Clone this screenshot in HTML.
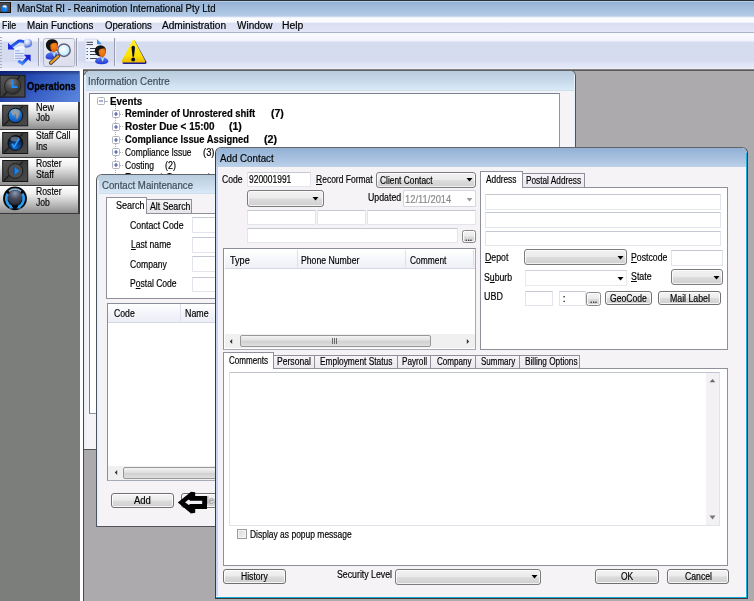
<!DOCTYPE html><html><head><meta charset="utf-8"><title>ManStat RI</title><style>
html,body{margin:0;padding:0;background:#acaaac}
#r{position:relative;width:754px;height:601px;overflow:hidden;will-change:transform;font-family:"Liberation Sans",sans-serif;font-size:11px}
#r>div,#r>svg{position:absolute}
#r>div.t{white-space:nowrap;line-height:1;height:auto;transform-origin:0 50%;-webkit-text-stroke:0.18px currentColor}
u{text-decoration:underline;text-underline-offset:1px}

</style></head><body><div id="r">
<div style="left:0px;top:0px;width:754px;height:601px;background:#acaaac"></div>
<div style="left:0px;top:0px;width:754px;height:18px;background:linear-gradient(#2c2f36 0,#2c2f36 1px,#b4ccec 1px,#b4ccec 2px,#95b2d5 2px,#b4cbe8 16px,#dce7f6 17px,#fdfdff 18px)"></div>
<div style="left:0px;top:2px;width:10.8px;height:10.6px;background:#4a4648;box-sizing:border-box;border-right:1px solid #141010;border-bottom:1px solid #141010;border-top:1px solid #2a2626"><svg width="11" height="11" viewBox="0 0 11 11" style="position:absolute;left:0;top:-1px"><circle cx="4.6" cy="6.6" r="3.5" fill="#0a78e6"/><path d="M2.6 4.2 Q4.6 2.4 6.8 4 L6.4 5.6 L5.6 8.6 L5 5.6 L3 5.2 Z" fill="#f0ece8"/><path d="M5.4 5.4 L5.7 8.4" stroke="#a85a30" stroke-width="0.7"/></svg></div>
<div class="t" id="t0" style="left:16.93px;top:4.28px;font-size:10px;font-weight:normal;color:#000;transform:scaleX(0.960);">ManStat RI - Reanimotion International Pty Ltd</div>
<div style="left:0px;top:18px;width:754px;height:15px;background:linear-gradient(#fdfdff 0,#fbfbff 4px,#d9dff2 5.5px,#e2e6f6 14px,#aab4c8 14px,#aab4c8 15px)"></div>
<div class="t" id="t1" style="left:2.48px;top:21.28px;font-size:10px;font-weight:normal;color:#000;transform:scaleX(0.882);">File</div>
<div class="t" id="t2" style="left:27.42px;top:21.28px;font-size:10px;font-weight:normal;color:#000;transform:scaleX(0.978);">Main Functions</div>
<div class="t" id="t3" style="left:104.75px;top:21.28px;font-size:10px;font-weight:normal;color:#000;transform:scaleX(0.958);">Operations</div>
<div class="t" id="t4" style="left:162.00px;top:21.28px;font-size:10px;font-weight:normal;color:#000;transform:scaleX(1.010);">Administration</div>
<div class="t" id="t5" style="left:237.00px;top:21.28px;font-size:10px;font-weight:normal;color:#000;transform:scaleX(0.997);">Window</div>
<div class="t" id="t6" style="left:282.39px;top:21.28px;font-size:10px;font-weight:normal;color:#000;transform:scaleX(1.039);">Help</div>
<div style="left:0px;top:33px;width:754px;height:37.5px;background:linear-gradient(#f9f3f7 0,#fafaff 1px,#f2f3fc 8px,#d6dcf0 9px,#d6dcf0 28px,#dee3f6 30px,#e4e8f8 35px,#f0f0fa 35.5px,#808080 36.2px,#808080 37px,#9a989a 37.5px)"></div>
<div style="left:0px;top:37px;width:2px;height:1px;background:#a8acc0"></div>
<div style="left:0px;top:40px;width:2px;height:1px;background:#a8acc0"></div>
<div style="left:0px;top:43px;width:2px;height:1px;background:#a8acc0"></div>
<div style="left:0px;top:46px;width:2px;height:1px;background:#a8acc0"></div>
<div style="left:0px;top:49px;width:2px;height:1px;background:#a8acc0"></div>
<div style="left:0px;top:52px;width:2px;height:1px;background:#a8acc0"></div>
<div style="left:0px;top:55px;width:2px;height:1px;background:#a8acc0"></div>
<div style="left:0px;top:58px;width:2px;height:1px;background:#a8acc0"></div>
<div style="left:0px;top:61px;width:2px;height:1px;background:#a8acc0"></div>
<div style="left:0px;top:64px;width:2px;height:1px;background:#a8acc0"></div>
<div style="left:0px;top:67px;width:2px;height:1px;background:#a8acc0"></div>
<div style="left:38px;top:38px;width:1px;height:27.5px;background:#9a9cae"></div>
<div style="left:39px;top:38px;width:1px;height:27.5px;background:#eef0f8"></div>
<div style="left:76px;top:38px;width:1px;height:27.5px;background:#9a9cae"></div>
<div style="left:77px;top:38px;width:1px;height:27.5px;background:#eef0f8"></div>
<div style="left:113.5px;top:38px;width:1px;height:27.5px;background:#9a9cae"></div>
<div style="left:114.5px;top:38px;width:1px;height:27.5px;background:#eef0f8"></div>
<div style="left:43.3px;top:37.5px;width:31.5px;height:29px;box-sizing:border-box;border:1px solid #b6b8c6;border-radius:2.5px;background:linear-gradient(#eceef6,#e0e3ee 60%,#dcdfeb)"></div>

<svg style="position:absolute;left:0;top:33px" width="160" height="37" viewBox="0 33 160 37">
 <defs>
  <linearGradient id="gb" x1="0" y1="0" x2="1" y2="1"><stop offset="0" stop-color="#1a2ee0"/><stop offset="0.6" stop-color="#2a6af0"/><stop offset="1" stop-color="#5aa0ff"/></linearGradient>
  <linearGradient id="gb2" x1="0" y1="1" x2="1" y2="0"><stop offset="0" stop-color="#5a9cff"/><stop offset="0.5" stop-color="#2a62f0"/><stop offset="1" stop-color="#1a22d8"/></linearGradient>
  <radialGradient id="gl" cx="0.42" cy="0.4" r="0.7"><stop offset="0" stop-color="#ffffff"/><stop offset="0.55" stop-color="#d4f0ff"/><stop offset="1" stop-color="#9cd4f8"/></radialGradient>
  <radialGradient id="gg" cx="0.35" cy="0.3" r="0.8"><stop offset="0" stop-color="#ffffff"/><stop offset="0.45" stop-color="#b8caf4"/><stop offset="1" stop-color="#3a5ad0"/></radialGradient>
  <linearGradient id="gy" x1="0" y1="0" x2="0" y2="1"><stop offset="0" stop-color="#fff02a"/><stop offset="0.7" stop-color="#fde000"/><stop offset="1" stop-color="#e8b800"/></linearGradient>
  <linearGradient id="gbody" x1="0" y1="0" x2="0" y2="1"><stop offset="0" stop-color="#5a78f4"/><stop offset="1" stop-color="#2238d0"/></linearGradient>
  <radialGradient id="gface" cx="0.5" cy="0.35" r="0.75"><stop offset="0" stop-color="#f88a1c"/><stop offset="0.7" stop-color="#e06410"/><stop offset="1" stop-color="#a83c08"/></radialGradient>
 </defs>
 <!-- icon1 sync -->
 <g>
  <rect x="13.2" y="47" width="11.8" height="13.4" fill="#e6edfc" stroke="#c0ccf0" stroke-width="0.7"/>
  <path d="M15 53.4h8.6M15 56h8.6M15 58.4h8.6" stroke="#93a3dc" stroke-width="1"/>
  <path d="M15 50.8h4.5" stroke="#93a3dc" stroke-width="1"/>
  <path d="M13.4 49.6 Q18 45.2 25.6 46 L25 48.6 Q20 47.6 16 50.6 Z" fill="#f4f7ff"/>
  <path d="M11.2 46.6 L18.6 41.2 Q21.5 40.2 25.2 42.6" stroke="url(#gb)" stroke-width="3" fill="none" stroke-linejoin="round"/>
  <path d="M8 42.8 L8 49.6 L14.8 49.6 Z" fill="#1a2ee0"/>
  <circle cx="28" cy="43" r="4.1" fill="url(#gg)"/>
  <path d="M23.4 46.4 Q27 49.4 31.4 45.8 Q28.6 47.2 25.6 46.2 Z" fill="#3a56d0" opacity=".8"/>
  <path d="M18.2 61 L22.4 63.6 L27.6 58" stroke="url(#gb2)" stroke-width="3" fill="none" stroke-linejoin="miter"/>
  <path d="M23.8 54.8 L30.6 54.8 L30.6 61.6 Z" fill="#1a22d8"/>
 </g>
 <!-- icon2 person + magnifier -->
 <g>
  <path d="M45.6 58 Q45.2 53 51 52.2 L56.5 52.5 L57.5 56 L52 59.5 Q48 60 45.6 58 Z" fill="url(#gbody)"/>
  <path d="M52 52.5 L54.3 57 L56 52.5 Z" fill="#a8dcfa"/>
  <path d="M50.5 51.5 Q45 49 46 43.5 Q47.5 38.8 53 39.2 Q57.5 39.6 58 44 L56.5 51 Z" fill="#111"/>
  <path d="M50.2 45 Q52 42.3 56 42.8 Q58.2 44 57.6 47.5 Q57 51 54.2 52.4 Q51.5 52 50.6 49 Z" fill="url(#gface)"/>
  <path d="M58.3 56 L50.8 63" stroke="#4a4656" stroke-width="3.8" stroke-linecap="round"/>
  <path d="M58.1 56.2 L51 62.8" stroke="#f8a01c" stroke-width="2" stroke-linecap="round"/>
  <circle cx="64" cy="50.2" r="6.2" fill="url(#gl)" stroke="#66607e" stroke-width="1.5"/>
 </g>
 <!-- icon3 doc + person -->
 <g>
  <path d="M85 39.2 h12 l5 5 v18 h-17 Z" fill="#edf2fd" stroke="#c8d2ee" stroke-width="0.7"/>
  <path d="M97 39.2 l5 5 h-5 Z" fill="#3c8ce8"/>
  <path d="M86.5 42.3h6.5M86.5 44.6h6.5M90 48.5h7M90 51.5h7M90 54.5h7M90 58.5h7" stroke="#3c4254" stroke-width="1"/>
  <path d="M86.6 48.5h1.2M86.6 51.5h1.2M86.6 54.5h1.2M86.6 58.5h1.2" stroke="#3c4254" stroke-width="1.1"/>
  <path d="M95 61.5 Q95.5 57.6 101 57.2 Q108 57.4 108.4 61.5 Q108 64 101.5 64.2 Q95.3 64 95 61.5 Z" fill="url(#gbody)"/>
  <path d="M100.8 57.4 L102.6 62 L104.4 57.4 Z" fill="#a8dcfa"/>
  <circle cx="100.4" cy="50.8" r="5.6" fill="#141414"/>
  <path d="M98.6 50.6 Q100.5 47.8 104.6 48.6 Q106.3 50 105.8 53 Q105.2 56.3 102.4 57.4 Q99.6 56.6 99 54 Z" fill="url(#gface)"/>
 </g>
 <!-- icon4 warning -->
 <g>
  <path d="M134.6 40.2 L146.4 61.8 Q147 64 144.8 64 L123.5 64 Q121.8 63.6 122.8 62 Z" fill="#1c1c94"/>
  <path d="M132.4 40.4 Q133.5 39 134.6 40.4 L145 60.4 Q145.8 62.6 143.6 62.6 L123.2 62.6 Q121 62.6 121.9 60.4 Z" fill="url(#gy)"/>
  <path d="M131.5 47.6 Q131.6 45.8 133.2 45.8 Q134.9 45.8 135 47.6 L134 56.4 Q133.2 57 132.5 56.4 Z" fill="#0c0c20"/>
  <circle cx="133.2" cy="59.5" r="1.9" fill="#0c0c20"/>
 </g>
</svg>

<div style="left:0px;top:70px;width:79.5px;height:531px;background:#7c7e7b"></div>
<div style="left:79.5px;top:69px;width:3px;height:532px;background:#fff"></div>
<div style="left:0px;top:69px;width:79.5px;height:2px;background:#eef0fa"></div>
<div style="left:82.5px;top:69.5px;width:671.5px;height:1.1px;background:#5a5a5a"></div>
<div style="left:82.5px;top:69.5px;width:1px;height:531.5px;background:#484848"></div>
<div style="left:0px;top:71px;width:79.3px;height:30.5px;background:linear-gradient(90deg,#14309a 0,#2a52c0 45%,#4b7ad8 100%)"></div>
<div style="left:0px;top:71px;width:79.3px;height:30.5px;background:linear-gradient(rgba(0,0,40,.45) 0,rgba(0,0,40,.3) 2px,rgba(0,0,30,.08) 4px,rgba(255,255,255,.04) 60%,rgba(255,255,255,.1))"></div>
<div class="t" id="t7" style="left:26.96px;top:81.47px;font-size:11px;font-weight:bold;color:#000;transform:scaleX(0.839);-webkit-text-stroke:0.35px #000;">Operations</div>
<div style="left:0px;top:102px;width:79px;height:28px;background:linear-gradient(#fdfdfd 0,#f0f0f0 25%,#c4c4c4 60%,#8e8e8e 100%);box-sizing:border-box;border-bottom:1px solid #3c3c3c;border-top:1px solid #fff"></div>
<div style="left:0px;top:130px;width:79px;height:28px;background:linear-gradient(#fdfdfd 0,#f0f0f0 25%,#c4c4c4 60%,#8e8e8e 100%);box-sizing:border-box;border-bottom:1px solid #3c3c3c;border-top:1px solid #fff"></div>
<div style="left:0px;top:158px;width:79px;height:28px;background:linear-gradient(#fdfdfd 0,#f0f0f0 25%,#c4c4c4 60%,#8e8e8e 100%);box-sizing:border-box;border-bottom:1px solid #3c3c3c;border-top:1px solid #fff"></div>
<div style="left:0px;top:186px;width:79px;height:28px;background:linear-gradient(#fdfdfd 0,#f0f0f0 25%,#c4c4c4 60%,#8e8e8e 100%);box-sizing:border-box;border-bottom:1px solid #3c3c3c;border-top:1px solid #fff"></div>
<div style="left:78px;top:102px;width:1.5px;height:112px;background:#3c3c3c"></div>
<div style="left:0px;top:213px;width:80px;height:1px;background:#3a3a3a"></div>
<div class="t" id="t8" style="left:35.97px;top:103.47px;font-size:10px;font-weight:normal;color:#000;transform:scaleX(0.902);">New</div>
<div class="t" id="t9" style="left:36.37px;top:113.47px;font-size:10px;font-weight:normal;color:#000;transform:scaleX(0.861);">Job</div>
<div class="t" id="t10" style="left:36.02px;top:131.28px;font-size:10px;font-weight:normal;color:#000;transform:scaleX(0.849);">Staff Call</div>
<div class="t" id="t11" style="left:35.90px;top:142.08px;font-size:10px;font-weight:normal;color:#000;transform:scaleX(0.854);">Ins</div>
<div class="t" id="t12" style="left:35.99px;top:159.28px;font-size:10px;font-weight:normal;color:#000;transform:scaleX(0.868);">Roster</div>
<div class="t" id="t13" style="left:36.00px;top:170.08px;font-size:10px;font-weight:normal;color:#000;transform:scaleX(0.877);">Staff</div>
<div class="t" id="t14" style="left:35.99px;top:187.28px;font-size:10px;font-weight:normal;color:#000;transform:scaleX(0.868);">Roster</div>
<div class="t" id="t15" style="left:36.37px;top:198.08px;font-size:10px;font-weight:normal;color:#000;transform:scaleX(0.861);">Job</div>

<svg style="position:absolute;left:0;top:71px" width="80" height="145" viewBox="0 71 80 145">
 <defs>
  <linearGradient id="sq" x1="0" y1="0" x2="1" y2="1"><stop offset="0" stop-color="#585858"/><stop offset="0.5" stop-color="#3c3c3c"/><stop offset="1" stop-color="#4c4c4c"/></linearGradient>
  <radialGradient id="orb" cx="0.42" cy="0.28" r="0.8"><stop offset="0" stop-color="#7c7c7c"/><stop offset="0.5" stop-color="#484848"/><stop offset="1" stop-color="#262626"/></radialGradient>
  <radialGradient id="orb2" cx="0.5" cy="0.2" r="0.9"><stop offset="0" stop-color="#8c98ac"/><stop offset="0.45" stop-color="#44485a"/><stop offset="1" stop-color="#20222c"/></radialGradient>
  <radialGradient id="orbb" cx="0.45" cy="0.25" r="0.85"><stop offset="0" stop-color="#8cccff"/><stop offset="0.35" stop-color="#1e86ec"/><stop offset="1" stop-color="#0a3a90"/></radialGradient>
  <radialGradient id="orbd" cx="0.5" cy="0.8" r="0.8"><stop offset="0" stop-color="#1468c8"/><stop offset="0.6" stop-color="#0a2c5c"/><stop offset="1" stop-color="#05070c"/></radialGradient>
 </defs>
 <g>
  <rect x="0" y="75.3" width="25" height="21.8" fill="url(#sq)" stroke="#161616" stroke-width="1"/>
  <path d="M3 96.5 L20 76" stroke="#1e1e1e" stroke-width="1.5"/>
  <circle cx="12.7" cy="86" r="8.2" fill="url(#orb)" stroke="#222" stroke-width="0.9"/>
  <path d="M12.4 80 V87 H17.6" stroke="#1e8cff" stroke-width="1.8" fill="none"/>
 </g>
 <g>
  <rect x="2.7" y="105.3" width="25" height="20.5" fill="url(#sq)" stroke="#161616" stroke-width="1"/>
  <path d="M4 125 L23 106" stroke="#1e1e1e" stroke-width="1.5"/>
  <circle cx="15.4" cy="115.5" r="7.3" fill="url(#orbb)" stroke="#101010" stroke-width="1"/>
  <path d="M11 111 Q15 108.3 19.6 110.6 L19.5 114 L17 120 L15.5 116 L12 114.5 Z" fill="#9a9a9a" opacity="0.92"/>
  <path d="M15.3 114 L16 119" stroke="#b05a28" stroke-width="0.9"/>
 </g>
 <g>
  <rect x="2.7" y="132.5" width="25" height="21" fill="url(#sq)" stroke="#161616" stroke-width="1"/>
  <path d="M4 152.5 L23 133.5" stroke="#1e1e1e" stroke-width="1.5"/>
  <circle cx="15.4" cy="143" r="7.4" fill="url(#orbd)" stroke="#0c0c0c" stroke-width="1"/>
  <ellipse cx="15" cy="139" rx="4.6" ry="2.4" fill="#9aa4b4" opacity=".55"/>
  <path d="M11.8 143.6 L14 147 L19.2 138.6" stroke="#2aa0ff" stroke-width="1.5" fill="none"/>
 </g>
 <g>
  <rect x="2.7" y="160.5" width="25" height="21" fill="url(#sq)" stroke="#161616" stroke-width="1"/>
  <path d="M4 180.5 L23 161.5" stroke="#1e1e1e" stroke-width="1.5"/>
  <circle cx="15.4" cy="171" r="7.4" fill="#4e4e4e" stroke="#1c1c1c" stroke-width="1"/>
  <path d="M13 166 L19.6 171 L13 176 Z" fill="#1a80ea"/>
  <path d="M13 166 L14.6 167.2 L14.6 174.8 L13 176 Z" fill="#0c50a8"/>
 </g>
 <g>
  <circle cx="15" cy="198.4" r="11.9" fill="#080808"/>
  <circle cx="15" cy="197.6" r="7.4" fill="url(#orb2)"/>
  <path d="M7.6 193.6 A9.4 9.4 0 0 0 11.6 207" stroke="#2a9cf4" stroke-width="2.5" fill="none"/>
  <path d="M22.4 193.6 A9.4 9.4 0 0 1 18.4 207" stroke="#2a9cf4" stroke-width="2.5" fill="none"/>
  <path d="M9 191.4 A9.2 9.2 0 0 1 21 191.4" stroke="#9cd4ff" stroke-width="1.6" fill="none" opacity=".85"/>
  <path d="M10 204.5 L13.5 208.3 L9.4 208.8 Z M20 204.5 L16.5 208.3 L20.6 208.8 Z" fill="#2a9cf4"/>
 </g>
</svg>

<div style="left:83.5px;top:70.4px;width:492.5px;height:379.6px;background:#f6f3f7;box-sizing:border-box;border:1px solid #50545a;border-top-color:#60646a;border-radius:6px 6px 0 0"></div>
<div style="left:84.5px;top:71.4px;width:490.5px;height:19.5px;background:linear-gradient(#b8ccde 0,#c8daea 50%,#daeaf8 96%,#b8c8d8 100%);border-radius:5px 5px 0 0"></div>
<div class="t" id="t16" style="left:88.01px;top:77.17px;font-size:10px;font-weight:normal;color:#404c58;transform:scaleX(0.986);">Information Centre</div>
<div style="left:84px;top:91px;width:491px;height:358px;background:#f6f3f7"></div>
<div style="left:84px;top:75px;width:1.5px;height:374px;background:#e6f0fb"></div>
<div style="left:573.5px;top:75px;width:1.5px;height:374px;background:#e6f0fb"></div>
<div style="left:88.8px;top:92.8px;width:471.2px;height:321.2px;background:#fff;box-sizing:border-box;border:1px solid #8e96a6;border-top-color:#788094;border-left-color:#788094"></div>
<div style="left:115px;top:105px;width:0;height:70px;border-left:1px dotted #a8a8a8"></div>
<div style="left:105px;top:101px;width:3px;height:1px;background:#b0b0b0"></div>
<svg style="position:absolute;left:97px;top:97px" width="8" height="8"><rect x="0.5" y="0.5" width="7" height="7" rx="1" fill="#fdfdfd" stroke="#b0b3bc"/><path d="M2 4h4" stroke="#5068b8" stroke-width="1"/></svg>
<div class="t" id="t17" style="left:109.58px;top:96.77px;font-size:10px;font-weight:bold;color:#000;transform:scaleX(0.980);">Events</div>
<svg style="position:absolute;left:112px;top:110px" width="8" height="8"><rect x="0.5" y="0.5" width="7" height="7" rx="1" fill="#fdfdfd" stroke="#b0b3bc"/><path d="M2 4h4" stroke="#5068b8" stroke-width="1"/><path d="M4 2v4" stroke="#2a3c98" stroke-width="1"/></svg>
<div style="left:120px;top:114px;width:3px;height:0;border-top:1px dotted #b0b0b0"></div>
<div class="t" id="t18" style="left:124.80px;top:109.27px;font-size:10px;font-weight:bold;color:#000;transform:scaleX(0.941);">Reminder of Unrostered shift</div>
<div class="t" id="t19" style="left:271.02px;top:109.27px;font-size:10px;font-weight:bold;color:#000;transform:scaleX(1.049);">(7)</div>
<svg style="position:absolute;left:112px;top:123px" width="8" height="8"><rect x="0.5" y="0.5" width="7" height="7" rx="1" fill="#fdfdfd" stroke="#b0b3bc"/><path d="M2 4h4" stroke="#5068b8" stroke-width="1"/><path d="M4 2v4" stroke="#2a3c98" stroke-width="1"/></svg>
<div style="left:120px;top:126px;width:3px;height:0;border-top:1px dotted #b0b0b0"></div>
<div class="t" id="t20" style="left:124.78px;top:121.77px;font-size:10px;font-weight:bold;color:#000;transform:scaleX(0.991);">Roster Due &lt; 15:00</div>
<div class="t" id="t21" style="left:229.42px;top:121.77px;font-size:10px;font-weight:bold;color:#000;transform:scaleX(1.049);">(1)</div>
<svg style="position:absolute;left:112px;top:136px" width="8" height="8"><rect x="0.5" y="0.5" width="7" height="7" rx="1" fill="#fdfdfd" stroke="#b0b3bc"/><path d="M2 4h4" stroke="#5068b8" stroke-width="1"/><path d="M4 2v4" stroke="#2a3c98" stroke-width="1"/></svg>
<div style="left:120px;top:139px;width:3px;height:0;border-top:1px dotted #b0b0b0"></div>
<div class="t" id="t22" style="left:124.99px;top:134.68px;font-size:10px;font-weight:bold;color:#000;transform:scaleX(0.935);">Compliance Issue Assigned</div>
<div class="t" id="t23" style="left:264.21px;top:134.68px;font-size:10px;font-weight:bold;color:#000;transform:scaleX(1.066);">(2)</div>
<svg style="position:absolute;left:112px;top:148px" width="8" height="8"><rect x="0.5" y="0.5" width="7" height="7" rx="1" fill="#fdfdfd" stroke="#b0b3bc"/><path d="M2 4h4" stroke="#5068b8" stroke-width="1"/><path d="M4 2v4" stroke="#2a3c98" stroke-width="1"/></svg>
<div style="left:120px;top:152px;width:3px;height:0;border-top:1px dotted #b0b0b0"></div>
<div class="t" id="t24" style="left:124.94px;top:147.58px;font-size:10px;font-weight:normal;color:#000;transform:scaleX(0.837);">Compliance Issue</div>
<div class="t" id="t25" style="left:203.31px;top:147.58px;font-size:10px;font-weight:normal;color:#000;transform:scaleX(0.940);">(3)</div>
<svg style="position:absolute;left:112px;top:161px" width="8" height="8"><rect x="0.5" y="0.5" width="7" height="7" rx="1" fill="#fdfdfd" stroke="#b0b3bc"/><path d="M2 4h4" stroke="#5068b8" stroke-width="1"/><path d="M4 2v4" stroke="#2a3c98" stroke-width="1"/></svg>
<div style="left:120px;top:165px;width:3px;height:0;border-top:1px dotted #b0b0b0"></div>
<div class="t" id="t26" style="left:124.93px;top:160.58px;font-size:10px;font-weight:normal;color:#000;transform:scaleX(0.856);">Costing</div>
<div class="t" id="t27" style="left:164.62px;top:160.58px;font-size:10px;font-weight:normal;color:#000;transform:scaleX(0.896);">(2)</div>
<div class="t" id="t28" style="left:124.79px;top:173.38px;font-size:10px;font-weight:bold;color:#000;transform:scaleX(0.964);">Request Comments</div>
<div class="t" id="t29" style="left:230.72px;top:173.38px;font-size:10px;font-weight:bold;color:#000;transform:scaleX(1.023);">(1)</div>
<div style="left:96px;top:174px;width:304px;height:353px;background:#f6f3f7;box-sizing:border-box;border:1px solid #50545a;border-top-color:#60646a;border-radius:6px 6px 0 0"></div>
<div style="left:97px;top:175px;width:302px;height:19px;background:linear-gradient(#b8ccde 0,#c8daea 50%,#daeaf8 96%,#b8c8d8 100%);border-radius:5px 5px 0 0"></div>
<div class="t" id="t30" style="left:101.70px;top:181.18px;font-size:10px;font-weight:normal;color:#404c58;transform:scaleX(0.963);">Contact Maintenance</div>
<div style="left:97px;top:180px;width:1.5px;height:346px;background:#e6f0fb"></div>
<div style="left:106px;top:213px;width:284px;height:86px;background:#fff;box-sizing:border-box;border:1px solid #8f9099"></div>
<div style="left:106px;top:197px;width:40.5px;height:17px;background:#fff;box-sizing:border-box;border:1px solid #8f9099;border-bottom:none"></div>
<div style="left:146.5px;top:199px;width:45.5px;height:14px;background:linear-gradient(#f4f4f6,#e6e6ea);box-sizing:border-box;border:1px solid #8f9099;border-left:none;border-bottom:none"></div>
<div class="t" id="t31" style="left:115.99px;top:200.78px;font-size:10px;font-weight:normal;color:#000;transform:scaleX(0.904);">Search</div>
<div class="t" id="t32" style="left:149.50px;top:202.28px;font-size:10px;font-weight:normal;color:#000;transform:scaleX(0.876);">Alt Search</div>
<div class="t" id="t33" style="left:130.23px;top:220.97px;font-size:10px;font-weight:normal;color:#000;transform:scaleX(0.875);">Contact Code</div>
<div class="t" id="t34" style="left:130.50px;top:240.28px;font-size:10px;font-weight:normal;color:#000;transform:scaleX(0.858);"><u>L</u>ast name</div>
<div class="t" id="t35" style="left:130.23px;top:259.78px;font-size:10px;font-weight:normal;color:#000;transform:scaleX(0.859);">Company</div>
<div class="t" id="t36" style="left:129.99px;top:279.38px;font-size:10px;font-weight:normal;color:#000;transform:scaleX(0.856);">P<u>o</u>stal Code</div>
<div style="left:192px;top:217px;width:138px;height:15.8px;background:#fff;box-sizing:border-box;border:1px solid #e4e5ec;border-top-color:#c4c8d2"></div>
<div style="left:192px;top:237px;width:138px;height:15.8px;background:#fff;box-sizing:border-box;border:1px solid #e4e5ec;border-top-color:#c4c8d2"></div>
<div style="left:192px;top:256.3px;width:138px;height:15.8px;background:#fff;box-sizing:border-box;border:1px solid #e4e5ec;border-top-color:#c4c8d2"></div>
<div style="left:192px;top:276.5px;width:138px;height:15.8px;background:#fff;box-sizing:border-box;border:1px solid #e4e5ec;border-top-color:#c4c8d2"></div>
<div style="left:106.5px;top:302.5px;width:283.5px;height:178.5px;background:#fff;box-sizing:border-box;border:1px solid #a6aab4;border-top-color:#8a8e98;border-left-color:#8a8e98"></div>
<div style="left:108px;top:304px;width:281px;height:18px;background:linear-gradient(#ffffff,#f4f5fa 50%,#eceef6)"></div>
<div style="left:108px;top:321.5px;width:281px;height:1px;background:#d5d8e2"></div>
<div style="left:179.5px;top:304px;width:1px;height:17px;background:#dde0ea"></div>
<div class="t" id="t37" style="left:113.53px;top:309.08px;font-size:10px;font-weight:normal;color:#000;transform:scaleX(0.866);">Code</div>
<div class="t" id="t38" style="left:184.98px;top:309.08px;font-size:10px;font-weight:normal;color:#000;transform:scaleX(0.886);">Name</div>
<div style="left:108px;top:466px;width:281px;height:13.5px;background:#f0f0f0"></div>
<div style="left:123px;top:467px;width:266px;height:11.5px;background:linear-gradient(#f4f4f4,#dcdcdc 50%,#cfcfcf 50%,#e0e0e0);box-sizing:border-box;border:1px solid #989898;border-radius:2px"></div>
<svg style="position:absolute;left:112.5px;top:468px" width="6" height="9"><path d="M4.2 2 L1.8 4.5 L4.2 7 Z" fill="#333"/></svg>
<div style="left:111px;top:493px;width:63px;height:14.5px;box-sizing:border-box;border:1px solid #707070;border-radius:3px;background:linear-gradient(#f4f4f4 0,#ebebeb 48%,#dcdcdc 52%,#cfcfcf 100%);box-shadow:inset 0 0 0 1px rgba(255,255,255,.8)"></div>
<div class="t" id="t39" style="left:134.00px;top:496.03px;font-size:10px;font-weight:normal;color:#000;transform:scaleX(0.949);">Add</div>
<div style="left:181px;top:493px;width:63px;height:14.5px;box-sizing:border-box;border:1px solid #707070;border-radius:3px;background:linear-gradient(#f4f4f4 0,#ebebeb 48%,#dcdcdc 52%,#cfcfcf 100%);box-shadow:inset 0 0 0 1px rgba(255,255,255,.8)"></div>
<div class="t" id="t40" style="left:199.71px;top:496.03px;font-size:10px;font-weight:normal;color:#9a9a9a;transform:scaleX(0.938);">Clear</div>
<svg style="position:absolute;left:176px;top:489px" width="36" height="26" viewBox="176 489 36 26"><path d="M177.8 502.5 L191 491.8 L195.2 492.2 L195.2 496 L207 496 L207 509 L195.2 509 L195.2 512.8 L191 513.4 Z" fill="#000"/><path d="M185 502.3 L188.8 499.6 L190.2 500.8 L202.2 500.8 L202.2 504 L190.2 504 L188.8 505 Z" fill="#f3f1f5"/></svg>
<div style="left:214.5px;top:146.7px;width:533.9px;height:452px;background:#f6f3f7;box-sizing:border-box;border:1px solid #3e3838;border-top-color:#626468;border-radius:6px 6px 0 0"></div>
<div style="left:215.5px;top:147.7px;width:531.9px;height:19px;background:linear-gradient(#93b0d5 0,#a5bfde 50%,#bdd0e8 100%);border-radius:5px 5px 0 0"></div>
<div class="t" id="t41" style="left:220.40px;top:153.58px;font-size:10px;font-weight:normal;color:#000;transform:scaleX(0.975);">Add Contact</div>
<div style="left:746.2px;top:153px;width:1.2px;height:444.7px;background:#18b0e0"></div>
<div style="left:216px;top:596.5px;width:531.4px;height:1.2px;background:#14a8d4"></div>
<div style="left:745.4px;top:167px;width:0.8px;height:429.5px;background:#fff"></div>
<div style="left:216px;top:167px;width:1.5px;height:429px;background:#c4d6f4"></div>
<div class="t" id="t42" style="left:222.33px;top:174.78px;font-size:10px;font-weight:normal;color:#000;transform:scaleX(0.858);">Code</div>
<div style="left:246.5px;top:171.5px;width:64.5px;height:15.5px;background:#fff;box-sizing:border-box;border:1px solid #e4e5ec;border-top-color:#c4c8d2;border-radius:1px;"></div>
<div class="t" id="t43" style="left:249.28px;top:175.08px;font-size:10px;font-weight:normal;color:#000;transform:scaleX(0.845);">920001991</div>
<div class="t" id="t44" style="left:315.50px;top:174.78px;font-size:10px;font-weight:normal;color:#000;transform:scaleX(0.850);"><u>R</u>ecord Format</div>
<div style="left:376.4px;top:171.6px;width:99.8px;height:16px;box-sizing:border-box;border:1px solid #7c7c7c;border-radius:3px;background:linear-gradient(#f2f2f2 0,#ebebeb 48%,#dddddd 52%,#cfcfcf 100%);box-shadow:inset 0 0 0 1px rgba(255,255,255,.7)"></div>
<svg style="position:absolute;left:466px;top:178.1px" width="8" height="5"><path d="M0.5 0 L6.5 0 L3.5 3.5 Z" fill="#000"/></svg>
<div class="t" id="t45" style="left:379.74px;top:175.78px;font-size:10px;font-weight:normal;color:#000;transform:scaleX(0.837);">Client Contact</div>
<div style="left:246.5px;top:190px;width:77px;height:17px;box-sizing:border-box;border:1px solid #7c7c7c;border-radius:3px;background:linear-gradient(#f2f2f2 0,#ebebeb 48%,#dddddd 52%,#cfcfcf 100%);box-shadow:inset 0 0 0 1px rgba(255,255,255,.7)"></div>
<svg style="position:absolute;left:312px;top:197px" width="8" height="5"><path d="M0.5 0 L6.5 0 L3.5 3.5 Z" fill="#000"/></svg>
<div class="t" id="t46" style="left:367.54px;top:193.47px;font-size:10px;font-weight:normal;color:#000;transform:scaleX(0.876);">Updated</div>
<div style="left:403px;top:189.7px;width:73.3px;height:17.8px;background:#fff;box-sizing:border-box;border:1px solid #d4d7de;border-radius:1px"></div>
<div class="t" id="t47" style="left:404.99px;top:194.78px;font-size:10px;font-weight:normal;color:#8a8a8a;transform:scaleX(0.939);">12/11/2014</div>
<svg style="position:absolute;left:466px;top:197.5px" width="8" height="5"><path d="M0.5 0 L6.5 0 L3.5 3.5 Z" fill="#9a9a9a"/></svg>
<div style="left:246.5px;top:209.5px;width:69px;height:15px;background:#fff;box-sizing:border-box;border:1px solid #e4e5ec;border-top-color:#c4c8d2;border-radius:1px;"></div>
<div style="left:316.5px;top:209.5px;width:49.5px;height:15px;background:#fff;box-sizing:border-box;border:1px solid #e4e5ec;border-top-color:#c4c8d2;border-radius:1px;"></div>
<div style="left:367px;top:209.5px;width:109.3px;height:15px;background:#fff;box-sizing:border-box;border:1px solid #e4e5ec;border-top-color:#c4c8d2;border-radius:1px;"></div>
<div style="left:246.5px;top:227.5px;width:211px;height:15.5px;background:#fff;box-sizing:border-box;border:1px solid #e4e5ec;border-top-color:#c4c8d2;border-radius:1px;"></div>
<div style="left:461.5px;top:229.7px;width:14.7px;height:13.3px;box-sizing:border-box;border:1px solid #8a8a8a;border-radius:2.5px;background:linear-gradient(#f4f4f4 0,#ebebeb 48%,#dcdcdc 52%,#cfcfcf 100%);box-shadow:inset 0 0 0 1px rgba(255,255,255,.8)"></div>
<div class="t" id="t48" style="left:465.42px;top:233.38px;font-size:10px;font-weight:normal;color:#000;transform:scaleX(0.865);">...</div>
<div style="left:223px;top:248px;width:253px;height:102px;background:#fff;box-sizing:border-box;border:1px solid #a6aab4;border-top-color:#8a8e98;border-left-color:#8a8e98"></div>
<div style="left:224.5px;top:250px;width:250px;height:18px;background:linear-gradient(#ffffff,#f6f7fb 50%,#eef0f7)"></div>
<div style="left:224.5px;top:267.5px;width:250px;height:1px;background:#d5d8e2"></div>
<div style="left:296.5px;top:250px;width:1px;height:17px;background:#dde0ea"></div>
<div style="left:405px;top:250px;width:1px;height:17px;background:#dde0ea"></div>
<div style="left:472.5px;top:250px;width:1px;height:17px;background:#dde0ea"></div>
<div class="t" id="t49" style="left:229.93px;top:255.78px;font-size:10px;font-weight:normal;color:#000;transform:scaleX(0.909);">Type</div>
<div class="t" id="t50" style="left:300.99px;top:255.78px;font-size:10px;font-weight:normal;color:#000;transform:scaleX(0.868);">Phone Number</div>
<div class="t" id="t51" style="left:409.54px;top:255.78px;font-size:10px;font-weight:normal;color:#000;transform:scaleX(0.840);">Comment</div>
<div style="left:224.5px;top:334px;width:250px;height:14px;background:#f0f0f0"></div>
<div style="left:239.5px;top:335px;width:191.5px;height:11.5px;background:linear-gradient(#f4f4f4,#dcdcdc 50%,#cfcfcf 50%,#e0e0e0);box-sizing:border-box;border:1px solid #989898;border-radius:2px"></div>
<svg style="position:absolute;left:228px;top:336.5px" width="6" height="9"><path d="M4.2 2 L1.8 4.5 L4.2 7 Z" fill="#333"/></svg>
<svg style="position:absolute;left:465px;top:336.5px" width="6" height="9"><path d="M1.8 2 L4.2 4.5 L1.8 7 Z" fill="#333"/></svg>
<svg style="position:absolute;left:331px;top:337.5px" width="8" height="7"><path d="M1.5 0v6M3.5 0v6M5.5 0v6" stroke="#6a6a6a" stroke-width="1"/></svg>
<div style="left:479.5px;top:187px;width:248px;height:162.5px;background:#fff;box-sizing:border-box;border:1px solid #8f9099"></div>
<div style="left:479.5px;top:171.3px;width:43px;height:16.7px;background:#fff;box-sizing:border-box;border:1px solid #8f9099;border-bottom:none"></div>
<div style="left:522.5px;top:173.2px;width:62.1px;height:13.8px;background:linear-gradient(#f6f4f8,#ebe9ee);box-sizing:border-box;border:1px solid #8f9099;border-left:none;border-bottom:none"></div>
<div class="t" id="t52" style="left:486.00px;top:175.08px;font-size:10px;font-weight:normal;color:#000;transform:scaleX(0.829);">Address</div>
<div class="t" id="t53" style="left:525.51px;top:176.47px;font-size:10px;font-weight:normal;color:#000;transform:scaleX(0.826);">Postal Address</div>
<div style="left:484.5px;top:194.3px;width:236.2px;height:15.6px;background:#fff;box-sizing:border-box;border:1px solid #e4e5ec;border-top-color:#c4c8d2;border-radius:1px;"></div>
<div style="left:484.5px;top:212.3px;width:236.2px;height:15.6px;background:#fff;box-sizing:border-box;border:1px solid #e4e5ec;border-top-color:#c4c8d2;border-radius:1px;"></div>
<div style="left:484.5px;top:230.5px;width:236.2px;height:15.6px;background:#fff;box-sizing:border-box;border:1px solid #e4e5ec;border-top-color:#c4c8d2;border-radius:1px;"></div>
<div class="t" id="t54" style="left:484.60px;top:252.67px;font-size:10px;font-weight:normal;color:#000;transform:scaleX(0.873);"><u>D</u>epot</div>
<div style="left:524.4px;top:249.1px;width:103.1px;height:16.1px;box-sizing:border-box;border:1px solid #7c7c7c;border-radius:3px;background:linear-gradient(#f2f2f2 0,#ebebeb 48%,#dddddd 52%,#cfcfcf 100%);box-shadow:inset 0 0 0 1px rgba(255,255,255,.7)"></div>
<svg style="position:absolute;left:617.3px;top:255.65px" width="8" height="5"><path d="M0.5 0 L6.5 0 L3.5 3.5 Z" fill="#000"/></svg>
<div class="t" id="t55" style="left:631.00px;top:252.67px;font-size:10px;font-weight:normal;color:#000;transform:scaleX(0.872);"><u>P</u>ostcode</div>
<div style="left:671px;top:250px;width:51.5px;height:15.5px;background:#fff;box-sizing:border-box;border:1px solid #e4e5ec;border-top-color:#c4c8d2;border-radius:1px;"></div>
<div class="t" id="t56" style="left:484.11px;top:273.28px;font-size:10px;font-weight:normal;color:#000;transform:scaleX(0.872);">S<u>u</u>burb</div>
<div style="left:524.5px;top:270px;width:102.8px;height:16.2px;background:#fff;box-sizing:border-box;border:1px solid #e8e9ee;border-top-color:#cfd2da"></div>
<svg style="position:absolute;left:617px;top:276.5px" width="8" height="5"><path d="M0.5 0 L6.5 0 L3.5 3.5 Z" fill="#000"/></svg>
<div class="t" id="t57" style="left:631.00px;top:271.58px;font-size:10px;font-weight:normal;color:#000;transform:scaleX(0.883);"><u>S</u>tate</div>
<div style="left:671px;top:269.2px;width:51.7px;height:15.8px;box-sizing:border-box;border:1px solid #7c7c7c;border-radius:3px;background:linear-gradient(#f2f2f2 0,#ebebeb 48%,#dddddd 52%,#cfcfcf 100%);box-shadow:inset 0 0 0 1px rgba(255,255,255,.7)"></div>
<svg style="position:absolute;left:712.5px;top:275.6px" width="8" height="5"><path d="M0.5 0 L6.5 0 L3.5 3.5 Z" fill="#000"/></svg>
<div class="t" id="t58" style="left:484.14px;top:292.28px;font-size:10px;font-weight:normal;color:#000;transform:scaleX(0.891);">UBD</div>
<div style="left:524.5px;top:290.5px;width:28px;height:15px;background:#fff;box-sizing:border-box;border:1px solid #e4e5ec;border-top-color:#c4c8d2;border-radius:1px;"></div>
<div style="left:558.5px;top:290.5px;width:27px;height:15px;background:#fff;box-sizing:border-box;border:1px solid #e4e5ec;border-top-color:#c4c8d2;border-radius:1px;"></div>
<div class="t" id="t59" style="left:562.63px;top:293.78px;font-size:10px;font-weight:normal;color:#000;transform:scaleX(1.000);">:</div>
<div style="left:586px;top:291.5px;width:14.5px;height:14px;box-sizing:border-box;border:1px solid #8a8a8a;border-radius:2.5px;background:linear-gradient(#f4f4f4 0,#ebebeb 48%,#dcdcdc 52%,#cfcfcf 100%);box-shadow:inset 0 0 0 1px rgba(255,255,255,.8)"></div>
<div class="t" id="t60" style="left:589.72px;top:295.28px;font-size:10px;font-weight:normal;color:#000;transform:scaleX(0.865);">...</div>
<div style="left:605px;top:291.3px;width:46.7px;height:14.2px;box-sizing:border-box;border:1px solid #707070;border-radius:3px;background:linear-gradient(#f4f4f4 0,#ebebeb 48%,#dcdcdc 52%,#cfcfcf 100%);box-shadow:inset 0 0 0 1px rgba(255,255,255,.8)"></div>
<div class="t" id="t61" style="left:609.55px;top:294.18px;font-size:10px;font-weight:normal;color:#000;transform:scaleX(0.860);">GeoCode</div>
<div style="left:658.2px;top:291.3px;width:63px;height:14.2px;box-sizing:border-box;border:1px solid #707070;border-radius:3px;background:linear-gradient(#f4f4f4 0,#ebebeb 48%,#dcdcdc 52%,#cfcfcf 100%);box-shadow:inset 0 0 0 1px rgba(255,255,255,.8)"></div>
<div class="t" id="t62" style="left:669.98px;top:294.18px;font-size:10px;font-weight:normal;color:#000;transform:scaleX(0.874);">Mail Label</div>
<div style="left:223px;top:368px;width:504.5px;height:197.5px;background:#fff;box-sizing:border-box;border:1px solid #8f9099"></div>
<div style="left:223px;top:352.3px;width:51px;height:16.7px;background:#fff;box-sizing:border-box;border:1px solid #8f9099;border-bottom:none"></div>
<div style="left:274px;top:354.5px;width:41.3px;height:13.5px;background:linear-gradient(#f6f4f8,#ebe9ee);box-sizing:border-box;border:1px solid #8f9099;border-left:none;border-bottom:none"></div>
<div class="t" id="t63" style="left:277.49px;top:357.48px;font-size:10px;font-weight:normal;color:#000;transform:scaleX(0.859);">Personal</div>
<div style="left:315.3px;top:354.5px;width:82.4px;height:13.5px;background:linear-gradient(#f6f4f8,#ebe9ee);box-sizing:border-box;border:1px solid #8f9099;border-left:none;border-bottom:none"></div>
<div class="t" id="t64" style="left:320.11px;top:357.48px;font-size:10px;font-weight:normal;color:#000;transform:scaleX(0.834);">Employment Status</div>
<div style="left:397.7px;top:354.5px;width:33.5px;height:13.5px;background:linear-gradient(#f6f4f8,#ebe9ee);box-sizing:border-box;border:1px solid #8f9099;border-left:none;border-bottom:none"></div>
<div class="t" id="t65" style="left:402.02px;top:357.48px;font-size:10px;font-weight:normal;color:#000;transform:scaleX(0.819);">Payroll</div>
<div style="left:431.2px;top:354.5px;width:45.1px;height:13.5px;background:linear-gradient(#f6f4f8,#ebe9ee);box-sizing:border-box;border:1px solid #8f9099;border-left:none;border-bottom:none"></div>
<div class="t" id="t66" style="left:436.75px;top:357.48px;font-size:10px;font-weight:normal;color:#000;transform:scaleX(0.809);">Company</div>
<div style="left:476.3px;top:354.5px;width:43.9px;height:13.5px;background:linear-gradient(#f6f4f8,#ebe9ee);box-sizing:border-box;border:1px solid #8f9099;border-left:none;border-bottom:none"></div>
<div class="t" id="t67" style="left:481.05px;top:357.48px;font-size:10px;font-weight:normal;color:#000;transform:scaleX(0.798);">Summary</div>
<div style="left:520.2px;top:354.5px;width:60.3px;height:13.5px;background:linear-gradient(#f6f4f8,#ebe9ee);box-sizing:border-box;border:1px solid #8f9099;border-left:none;border-bottom:none"></div>
<div class="t" id="t68" style="left:525.31px;top:357.48px;font-size:10px;font-weight:normal;color:#000;transform:scaleX(0.822);">Billing Options</div>
<div class="t" id="t69" style="left:229.35px;top:355.78px;font-size:10px;font-weight:normal;color:#000;transform:scaleX(0.809);">Comments</div>
<div style="left:229px;top:371.5px;width:491px;height:154.5px;background:#fff;box-sizing:border-box;border:1px solid #e2e3ea;border-top-color:#bfc3cc"></div>
<div style="left:706px;top:373px;width:13px;height:152px;background:#f3f1f4"></div>
<svg style="position:absolute;left:709px;top:378px" width="8" height="5"><path d="M0.7 4.3 L3.5 1 L6.3 4.3 Z" fill="#6a6a6a"/></svg>
<svg style="position:absolute;left:709px;top:515px" width="8" height="5"><path d="M0.5 0.5 L3.5 4.5 L6.5 0.5 Z" fill="#777"/></svg>
<div style="left:237px;top:529px;width:10.2px;height:10.3px;box-sizing:border-box;border:1px solid #9c9c9c;background:linear-gradient(135deg,#d8d8d8,#f6f6f6);box-shadow:inset 0 0 0 1px #f4f4f4"></div>
<div class="t" id="t70" style="left:249.80px;top:529.98px;font-size:10px;font-weight:normal;color:#000;transform:scaleX(0.847);">Display as popup message</div>
<div style="left:223px;top:569px;width:63px;height:15px;box-sizing:border-box;border:1px solid #707070;border-radius:3px;background:linear-gradient(#f4f4f4 0,#ebebeb 48%,#dcdcdc 52%,#cfcfcf 100%);box-shadow:inset 0 0 0 1px rgba(255,255,255,.8)"></div>
<div class="t" id="t71" style="left:241.39px;top:572.27px;font-size:10px;font-weight:normal;color:#000;transform:scaleX(0.858);">History</div>
<div class="t" id="t72" style="left:336.81px;top:570.27px;font-size:10px;font-weight:normal;color:#000;transform:scaleX(0.876);">Security Level</div>
<div style="left:395px;top:568.5px;width:146px;height:16px;box-sizing:border-box;border:1px solid #7c7c7c;border-radius:3px;background:linear-gradient(#f2f2f2 0,#ebebeb 48%,#dddddd 52%,#cfcfcf 100%);box-shadow:inset 0 0 0 1px rgba(255,255,255,.7)"></div>
<svg style="position:absolute;left:531px;top:575px" width="8" height="5"><path d="M0.5 0 L6.5 0 L3.5 3.5 Z" fill="#000"/></svg>
<div style="left:595.3px;top:569px;width:63.4px;height:15px;box-sizing:border-box;border:1px solid #707070;border-radius:3px;background:linear-gradient(#f4f4f4 0,#ebebeb 48%,#dcdcdc 52%,#cfcfcf 100%);box-shadow:inset 0 0 0 1px rgba(255,255,255,.8)"></div>
<div class="t" id="t73" style="left:621.48px;top:572.27px;font-size:10px;font-weight:normal;color:#000;transform:scaleX(0.845);">OK</div>
<div style="left:667px;top:569px;width:61.6px;height:15px;box-sizing:border-box;border:1px solid #707070;border-radius:3px;background:linear-gradient(#f4f4f4 0,#ebebeb 48%,#dcdcdc 52%,#cfcfcf 100%);box-shadow:inset 0 0 0 1px rgba(255,255,255,.8)"></div>
<div class="t" id="t74" style="left:684.53px;top:572.27px;font-size:10px;font-weight:normal;color:#000;transform:scaleX(0.869);">Cancel</div>
</div></body></html>
